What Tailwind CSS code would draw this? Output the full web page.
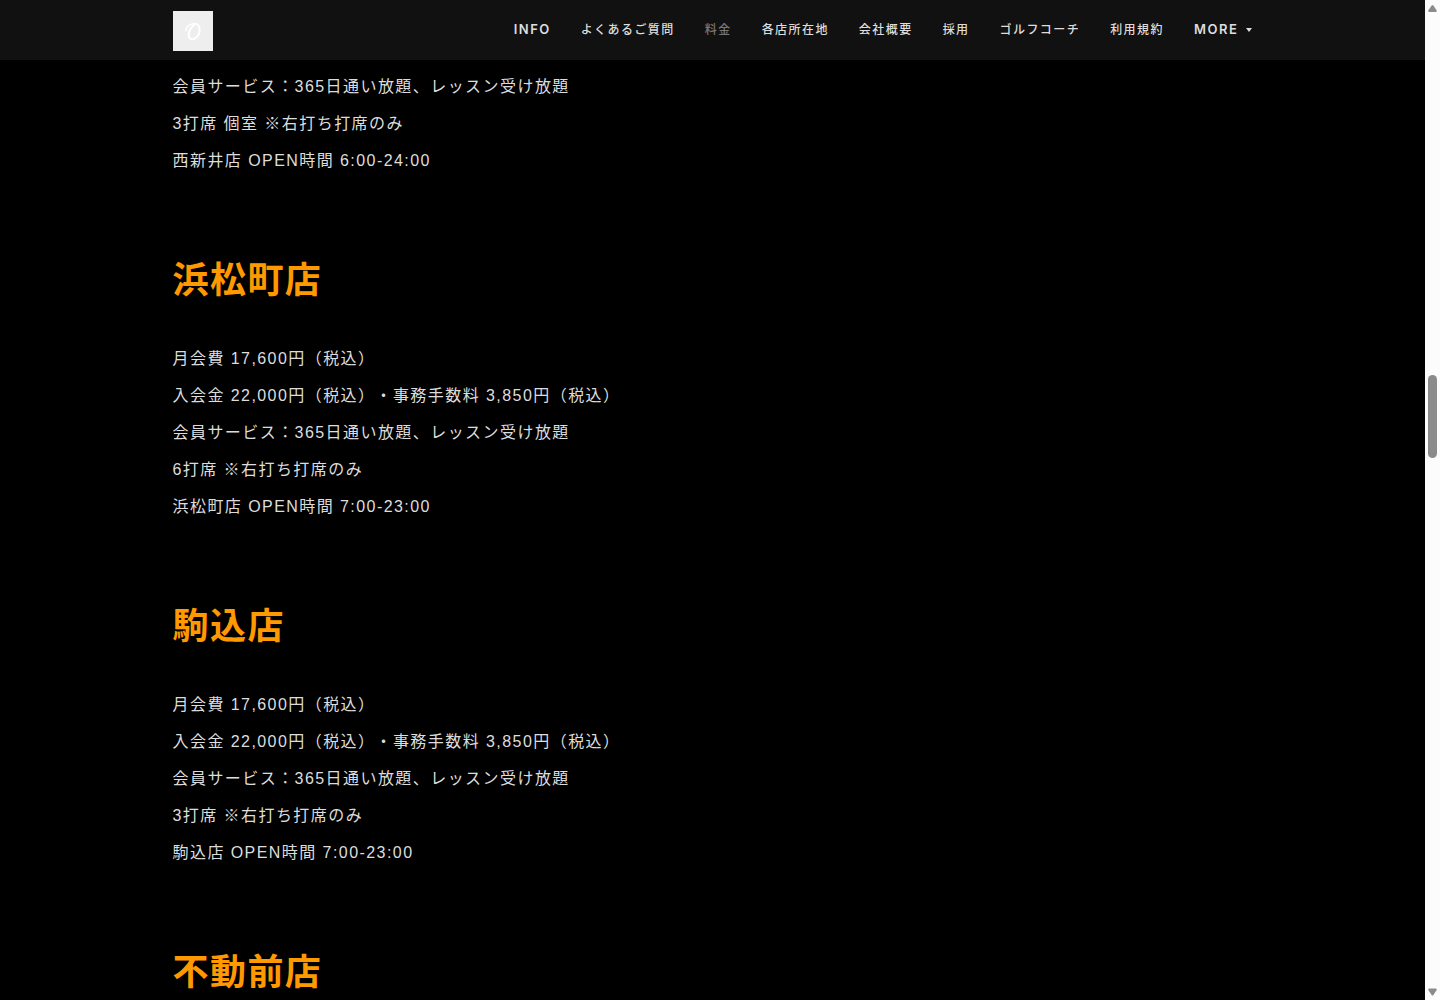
<!DOCTYPE html>
<html lang="ja">
<head>
  <meta charset="UTF-8" />
  <meta name="viewport" content="width=device-width, initial-scale=1" />
  <title>料金</title>
  <script src="https://cdn.jsdelivr.net/npm/@tailwindcss/browser@4"></script>
</head>
<body class="flex h-screen overflow-hidden bg-black font-['Liberation_Sans','Noto_Sans_CJK_JP',sans-serif] text-[#dddddd]">
  <div class="flex min-w-0 flex-1 flex-col">
    <header class="shrink-0 bg-[#111111]">
      <div class="mx-auto flex h-[60px] max-w-[1080px] items-center justify-between">
        <a href="#" aria-label="Home" class="mt-[2px]">
          <svg class="size-10 bg-[#eeeeee]" viewBox="0 0 40 40" fill="none" stroke="#ffffff" stroke-linecap="round">
            <path stroke-width="1.5" d="M12.800 20C12.500 16.500 16 13 21 12.800" />
            <path stroke-width="2" d="M20.500 14.500C17.500 17 15.600 21 15.800 24.500C16 27.300 17.800 28.600 20 28.200C23.800 27.500 26.600 23.500 26.700 19C26.800 15 24.700 12.800 21 12.800" />
          </svg>
        </a>
        <nav class="flex items-center gap-[30px] font-['Inter','Noto_Sans_CJK_JP',sans-serif] text-xs font-medium tracking-[0.12em] whitespace-nowrap">
          <a href="#" class="text-[13px] font-semibold">INFO</a>
          <a href="#">よくあるご質問</a>
          <a href="#" class="text-[#777777]">料金</a>
          <a href="#">各店所在地</a>
          <a href="#">会社概要</a>
          <a href="#">採用</a>
          <a href="#">ゴルフコーチ</a>
          <a href="#">利用規約</a>
          <button type="button" class="flex items-center gap-[6px] text-[13px] font-semibold tracking-[0.12em]">MORE
            <svg class="h-1 w-2" viewBox="0 0 8 4" fill="currentColor"><path d="M1 0h6L4 4z" /></svg>
          </button>
        </nav>
      </div>
    </header>

    <main class="min-h-0 flex-1 overflow-hidden pt-2">
      <div class="mx-auto flex max-w-[1080px] flex-col gap-[72px] leading-[37px] tracking-[0.09em] [text-spacing-trim:space-all]">
        <section>
          <p>会員サービス：365日通い放題、レッスン受け放題</p>
          <p>3打席 個室 ※右打ち打席のみ</p>
          <p>西新井店 OPEN時間 6:00-24:00</p>
        </section>

        <section>
          <h2 class="mb-[29px] text-4xl leading-[60px] font-bold tracking-[0.04em] text-[#ff9900]">浜松町店</h2>
          <p>月会費 17,600円（税込）</p>
          <p>入会金 22,000円（税込）・事務手数料 3,850円（税込）</p>
          <p>会員サービス：365日通い放題、レッスン受け放題</p>
          <p>6打席 ※右打ち打席のみ</p>
          <p>浜松町店 OPEN時間 7:00-23:00</p>
        </section>

        <section>
          <h2 class="mb-[29px] text-4xl leading-[60px] font-bold tracking-[0.04em] text-[#ff9900]">駒込店</h2>
          <p>月会費 17,600円（税込）</p>
          <p>入会金 22,000円（税込）・事務手数料 3,850円（税込）</p>
          <p>会員サービス：365日通い放題、レッスン受け放題</p>
          <p>3打席 ※右打ち打席のみ</p>
          <p>駒込店 OPEN時間 7:00-23:00</p>
        </section>

        <section>
          <h2 class="mb-[29px] text-4xl leading-[60px] font-bold tracking-[0.04em] text-[#ff9900]">不動前店</h2>
        </section>
      </div>
    </main>
  </div>

  <!-- Scrollbar -->
  <div class="flex w-[15px] shrink-0 flex-col items-center bg-[#fcfcfc] py-1 text-[#8b8b8b]" aria-hidden="true">
    <svg class="h-2 w-[9px]" viewBox="0 0 9 8" fill="currentColor"><path d="M4.500 1Q5 1 5.400 1.600L8.700 6.400Q9 8 7.800 8H1.200Q0 8 .3 6.400L3.600 1.600Q4 1 4.500 1z" /></svg>
    <div class="flex w-[9px] flex-1 flex-col">
      <div class="grow-[363]"></div>
      <div class="h-[83px] rounded-full bg-[#8b8b8b]"></div>
      <div class="grow-[530]"></div>
    </div>
    <svg class="h-2 w-[9px]" viewBox="0 0 9 8" fill="currentColor"><path d="M4.500 7.500Q5 7.500 5.400 6.900L8.700 2Q9 .5 7.800 .5H1.200Q0 .5 .3 2L3.600 6.900Q4 7.500 4.500 7.500z" /></svg>
  </div>
</body>
</html>
